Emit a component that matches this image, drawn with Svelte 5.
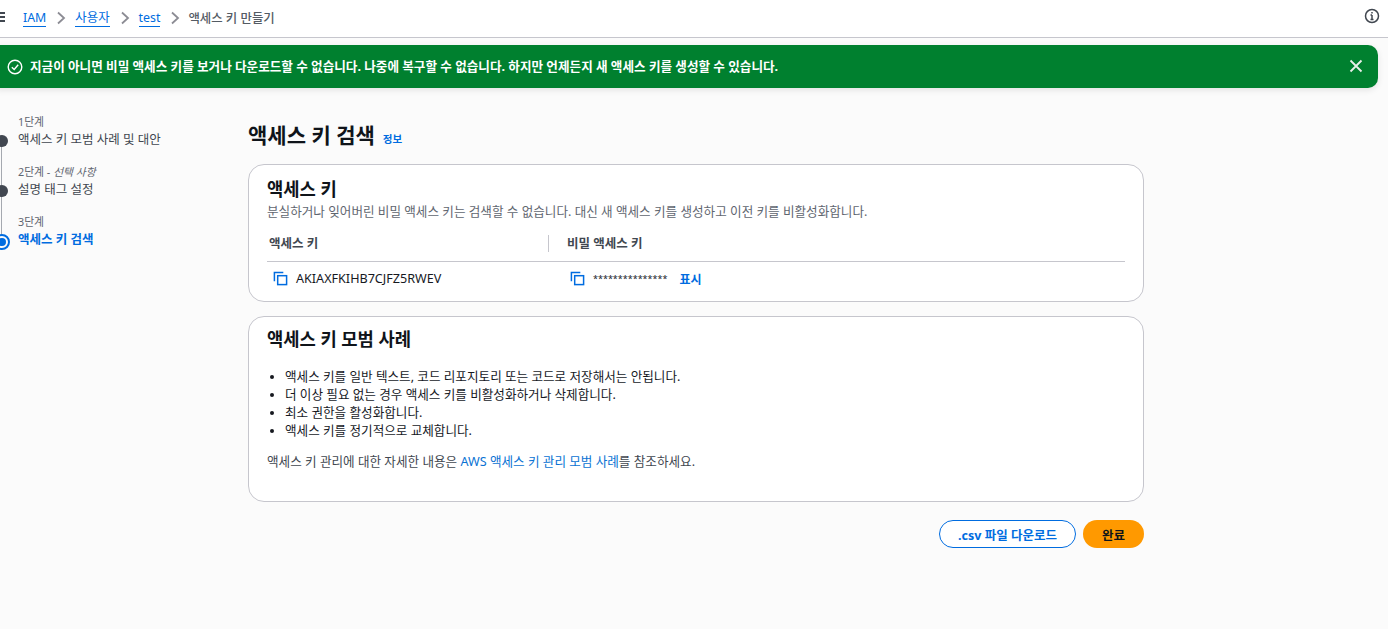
<script>
  const steps = [
    { label: '1단계', title: '액세스 키 모범 사례 및 대안' },
    { label: '2단계', opt: '선택 사항', title: '설명 태그 설정' },
    { label: '3단계', title: '액세스 키 검색', active: true }
  ]
  const tips = [
    '액세스 키를 일반 텍스트, 코드 리포지토리 또는 코드로 저장해서는 안됩니다.',
    '더 이상 필요 없는 경우 액세스 키를 비활성화하거나 삭제합니다.',
    '최소 권한을 활성화합니다.',
    '액세스 키를 정기적으로 교체합니다.'
  ]
</script>

<div class="page">
  <header class="top">
    <div class="burger"><i></i><i></i><i></i></div>
    <nav class="crumbs">
      <a href="#a">IAM</a>
      <svg class="chev" viewBox="0 0 10 14"><path d="M2 1.500 8 7l-6 5.500" /></svg>
      <a href="#a">사용자</a>
      <svg class="chev" viewBox="0 0 10 14"><path d="M2 1.500 8 7l-6 5.500" /></svg>
      <a href="#a">test</a>
      <svg class="chev" viewBox="0 0 10 14"><path d="M2 1.500 8 7l-6 5.500" /></svg>
      <span>액세스 키 만들기</span>
    </nav>
    <svg class="info" viewBox="0 0 16 16">
      <circle cx="8" cy="8" r="6.500" />
      <path d="M8 7v4.500M6.500 11.500h3M6.500 7H8" />
      <path d="M8 4v1.500" />
    </svg>
  </header>

  <div class="flash">
    <svg class="ok" viewBox="0 0 16 16">
      <circle cx="8" cy="8" r="6.800" />
      <path d="M4.800 8.200 7.200 10.500 11.200 5.800" />
    </svg>
    <p>지금이 아니면 비밀 액세스 키를 보거나 다운로드할 수 없습니다. 나중에 복구할 수 없습니다. 하지만 언제든지 새 액세스 키를 생성할 수 있습니다.</p>
    <svg class="close" viewBox="0 0 14 14"><path d="M1.500 1.500l11 11M12.500 1.500l-11 11" /></svg>
  </div>

  <div class="body">
    <aside class="steps">
      {#each steps as s, i}
        <div class="step" class:active={s.active}>
          <div class="label">{s.label}{#if s.opt}{' - '}<em>{s.opt}</em>{/if}</div>
          <div class="title">{s.title}</div>
          <span class="dot"></span>
          {#if i < steps.length - 1}<span class="line"></span>{/if}
        </div>
      {/each}
    </aside>

    <main class="content">
      <div class="heading">
        <h1>액세스 키 검색</h1>
        <a href="#a" class="inf">정보</a>
      </div>

      <section class="card keys">
        <h2>액세스 키</h2>
        <p class="desc">분실하거나 잊어버린 비밀 액세스 키는 검색할 수 없습니다. 대신 새 액세스 키를 생성하고 이전 키를 비활성화합니다.</p>
        <div class="table">
          <div class="th first">액세스 키</div>
          <div class="th second">비밀 액세스 키</div>
          <div class="td first">
            <svg class="copy" viewBox="0 0 16 16"><path d="M1.500 11V1.500H11" /><rect x="5" y="5" width="9.500" height="9.500" /></svg>
            <span>AKIAXFKIHB7CJFZ5RWEV</span>
          </div>
          <div class="td second">
            <svg class="copy" viewBox="0 0 16 16"><path d="M1.500 11V1.500H11" /><rect x="5" y="5" width="9.500" height="9.500" /></svg>
            <span class="stars">***************</span>
            <a href="#a" class="show">표시</a>
          </div>
        </div>
      </section>

      <section class="card tips">
        <h2>액세스 키 모범 사례</h2>
        <ul>
          {#each tips as t}<li>{t}</li>{/each}
        </ul>
        <p class="more">액세스 키 관리에 대한 자세한 내용은 <a href="#a">AWS 액세스 키 관리 모범 사례</a>를 참조하세요.</p>
      </section>

      <div class="actions">
        <button class="btn normal">.csv 파일 다운로드</button>
        <button class="btn primary">완료</button>
      </div>
    </main>
  </div>
</div>

<style>
  :global(body) {
    margin: 0;
    background: #fbfbfb;
  }

  .page {
    height: 629px;
    overflow: hidden;
    font-family: "Noto Sans", "Noto Sans CJK KR", sans-serif;
    font-size: 12.500px;
    color: #414750;
  }

  a {
    color: #006ce0;
    text-decoration: none;
  }

  .top {
    height: 37px;
    background: #fff;
    border-bottom: 1px solid #c6c6cd;
    display: flex;
    align-items: center;
    padding-right: 8px;
  }

  .burger {
    width: 5px;
    display: flex;
    flex-direction: column;
    gap: 2px;
    margin-top: -4px;
  }

  .burger i {
    height: 2px;
    background: #414750;
  }

  .crumbs {
    margin-left: 18px;
    display: flex;
    align-items: center;
    font-size: 12.400px;
    margin-top: -1px;
  }

  .crumbs a {
    border-bottom: 1px solid #006ce0;
    line-height: 16px;
  }

  .crumbs span {
    font-weight: 500;
    color: #545b64;
    margin-left: -1px;
  }

  .chev {
    width: 10px;
    height: 14px;
    margin: 0 9px 0 10px;
    fill: none;
    stroke: #8c8c94;
    stroke-width: 1.800;
  }

  .info {
    width: 16px;
    height: 16px;
    margin-left: auto;
    margin-top: -6px;
    fill: none;
    stroke: #414750;
    stroke-width: 1.500;
  }

  .flash {
    height: 43px;
    margin: 7px 10px 0 -10px;
    padding: 0 14px 0 16px;
    background: #00802f;
    border-radius: 10px;
    box-shadow: 0 2px 6px rgba(0, 0, 0, 0.1);
    display: flex;
    align-items: center;
    color: #fff;
  }

  .flash p {
    margin: 0 0 0 7px;
    font-size: 12.600px;
    font-weight: 700;
    flex: 1;
    position: relative;
    top: -1px;
  }

  .ok {
    width: 16px;
    height: 16px;
    margin-left: 1px;
    fill: none;
    stroke: #fff;
    stroke-width: 1.400;
  }

  .close {
    width: 14px;
    height: 14px;
    margin-top: -1px;
    margin-right: 1px;
    fill: none;
    stroke: #e8efe9;
    stroke-width: 1.800;
  }

  .body {
    display: flex;
  }

  .steps {
    width: 248px;
    flex: none;
    padding-top: 27px;
  }

  .step {
    position: relative;
    height: 50px;
    padding-left: 18px;
  }

  .label {
    font-size: 10.800px;
    line-height: 14px;
    color: #5f6670;
  }

  .label em {
    font-style: italic;
  }

  .title {
    font-size: 12.500px;
    line-height: 22px;
    color: #414750;
  }

  .active .title {
    color: #006ce0;
    font-weight: 700;
  }

  .dot {
    position: absolute;
    left: -4.500px;
    top: 20px;
    width: 12px;
    height: 12px;
    border-radius: 50%;
    background: #414750;
  }

  .active .dot {
    left: -4px;
    top: 21px;
    width: 8px;
    height: 8px;
    background: #006ce0;
    border: 2px solid #fbfbfb;
    outline: 2px solid #006ce0;
  }

  .line {
    position: absolute;
    left: 1px;
    top: 32px;
    bottom: -20px;
    width: 1px;
    background: #a5a9b0;
  }

  .content {
    width: 896px;
    flex: none;
  }

  .heading {
    margin-top: 33px;
    height: 29px;
    display: flex;
    align-items: baseline;
    gap: 8px;
  }

  h1 {
    margin: 0;
    font-size: 21px;
    line-height: 28px;
    font-weight: 700;
    color: #0f141a;
  }

  .inf {
    font-size: 10.500px;
    font-weight: 700;
  }

  .card {
    box-sizing: border-box;
    background: #fff;
    border: 1px solid #c6c6cd;
    border-radius: 16px;
  }

  .keys {
    height: 138px;
    margin-top: 14px;
    padding: 12px 18px 0;
  }

  h2 {
    margin: 0;
    font-size: 17.700px;
    line-height: 24px;
    font-weight: 700;
    color: #0f141a;
  }

  .desc {
    margin: 2px 0 0;
    font-size: 12.600px;
    line-height: 18px;
    color: #5f6670;
  }

  .table {
    display: grid;
    grid-template-columns: 281px 1fr;
    margin-top: 14px;
  }

  .th {
    height: 18px;
    line-height: 18px;
    padding-bottom: 8px;
    font-size: 12.500px;
    font-weight: 700;
    color: #414750;
    border-bottom: 1px solid #c6c6cd;
  }

  .th.first {
    padding-left: 2px;
  }

  .th.second::before {
    content: "";
    display: inline-block;
    width: 1px;
    height: 17px;
    margin-right: 18px;
    background: #c6c6cd;
    vertical-align: top;
  }

  .td {
    display: flex;
    align-items: center;
    height: 33px;
    font-size: 12.600px;
    color: #16191f;
  }

  .td.first {
    padding-left: 6px;
  }

  .td.second {
    padding-left: 22px;
  }

  .copy {
    width: 15px;
    height: 15px;
    margin-right: 8px;
    fill: none;
    stroke: #006ce0;
    stroke-width: 1.600;
  }

  .stars {
    font-size: 9px;
  }

  .show {
    margin-left: 12px;
    font-size: 12px;
    font-weight: 700;
  }

  .tips {
    height: 186px;
    margin-top: 14px;
    padding: 10px 18px 0;
  }

  ul {
    margin: 17px 0 0;
    padding-left: 18px;
    color: #16191f;
    font-size: 12.600px;
    line-height: 18px;
  }

  .more {
    margin: 13px 0 0;
    font-size: 12.600px;
    line-height: 18px;
    color: #414750;
  }

  .more a {
    color: #0972d3;
  }

  .actions {
    margin-top: 18px;
    display: flex;
    justify-content: flex-end;
    gap: 7px;
  }

  .btn {
    box-sizing: border-box;
    height: 28px;
    border-radius: 14px;
    font-family: inherit;
    font-size: 12.500px;
    font-weight: 700;
    padding: 0;
  }

  .normal {
    width: 137px;
    background: #fff;
    border: 1px solid #006ce0;
    color: #006ce0;
  }

  .primary {
    width: 61px;
    background: #ff9900;
    border: 0;
    color: #0f141a;
  }
</style>
